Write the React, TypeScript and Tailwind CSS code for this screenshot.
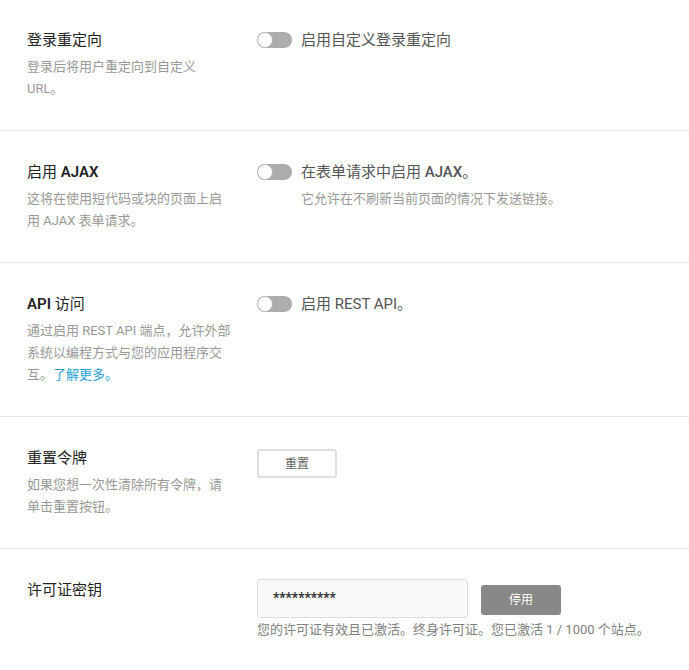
import type { ReactNode } from "react";

function Toggle() {
  return (
    <span className="relative inline-block w-[35px] h-4 shrink-0 rounded-full bg-[#acacac]">
      <span className="absolute left-0 top-0 w-4 h-4 rounded-full bg-white border border-[#b8b8b8]" />
    </span>
  );
}

function Row({
  title,
  desc,
  children,
}: {
  title: ReactNode;
  desc: ReactNode;
  children: ReactNode;
}) {
  return (
    <div className="flex gap-[26px] px-[27px] pt-[30px] first:pt-[29px] pb-[30px] border-b border-[#e6e6e6]">
      <div className="w-[204px] shrink-0">
        <div className="text-[15px] leading-[22px] text-[#222]">{title}</div>
        {desc && <div className="mt-[5px] text-[13px] leading-[22px] text-[#999]">{desc}</div>}
      </div>
      <div className="flex-1 min-w-0">{children}</div>
    </div>
  );
}

export default function App() {
  return (
    <div className="w-[689px] bg-white font-['Roboto','Noto_Sans_CJK_SC',sans-serif]">
      <Row title="登录重定向" desc="登录后将用户重定向到自定义URL。">
        <div className="flex items-center gap-[9px] h-[22px]">
          <Toggle />
          <span className="text-[15px] text-[#555]">启用自定义登录重定向</span>
        </div>
      </Row>

      <Row
        title={
          <>
            启用 <span className="font-semibold">AJAX</span>
          </>
        }
        desc="这将在使用短代码或块的页面上启用 AJAX 表单请求。"
      >
        <div className="flex items-center gap-[9px] h-[22px]">
          <Toggle />
          <span className="text-[15px] text-[#555]">
            在表单请求中启用 <span className="font-medium">AJAX</span>。
          </span>
        </div>
        <p className="mt-[5px] pl-11 text-[13px] leading-[22px] text-[#999]">
          它允许在不刷新当前页面的情况下发送链接。
        </p>
      </Row>

      <Row
        title={
          <>
            <span className="font-semibold">API</span> 访问
          </>
        }
        desc={
          <>
            通过启用 REST API 端点，允许外部系统以编程方式与您的应用程序交互。
            <a href="#" className="text-[#2b9fd4]">
              了解更多。
            </a>
          </>
        }
      >
        <div className="flex items-center gap-[9px] h-[22px]">
          <Toggle />
          <span className="text-[15px] text-[#555]">启用 REST API。</span>
        </div>
      </Row>

      <Row title="重置令牌" desc="如果您想一次性清除所有令牌，请单击重置按钮。">
        <button className="w-[80px] h-[29px] mt-[2px] rounded-[3px] border-2 border-[#dedede] bg-white text-[12px] text-[#666]">
          重置
        </button>
      </Row>

      <Row title="许可证密钥" desc={null}>
        <div className="flex items-center gap-[13px]">
          <div className="w-[211px] h-[39px] flex items-center px-[15px] rounded-[3px] border border-[#dcdcdc] bg-[#f9f9f9] text-[14px] font-semibold text-[#333]">
            **********
          </div>
          <button className="w-[80px] h-[30px] mt-[2px] rounded-[3px] bg-[#888] text-[12px] text-white">
            停用
          </button>
        </div>
        <p className="mt-[1px] text-[13px] leading-[22px] text-[#808080]">
          您的许可证有效且已激活。终身许可证。您已激活 1 / 1000 个站点。
        </p>
      </Row>
    </div>
  );
}
